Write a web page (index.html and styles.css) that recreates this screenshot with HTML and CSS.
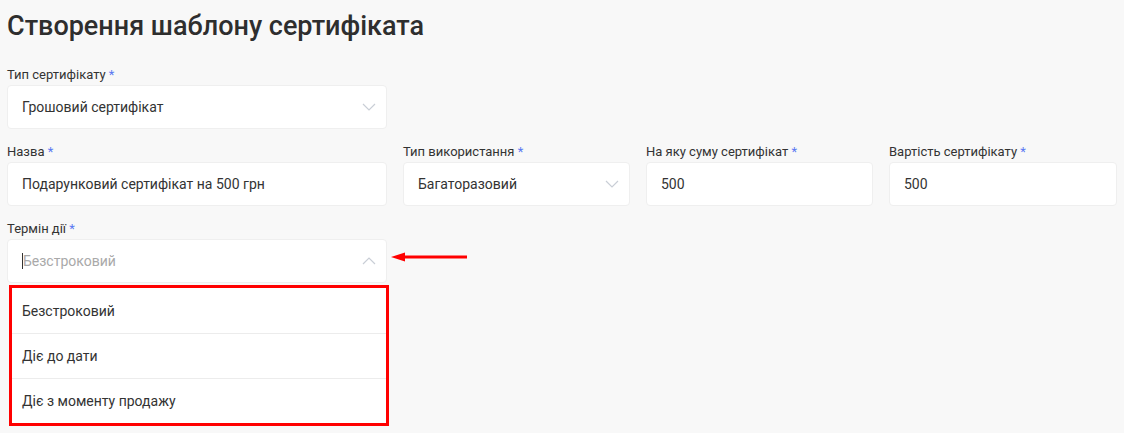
FILE: index.html
```html
<!DOCTYPE html>
<html lang="uk">
<head>
<meta charset="utf-8">
<link rel="stylesheet" href="styles.css">
</head>
<body>
<div class="page">
  <h1 class="title">Створення шаблону сертифіката</h1>
  <div class="form">
    <div class="field">
      <label class="label">Тип сертифікату <span class="req">*</span></label>
      <div class="box select">
        <span class="value">Грошовий сертифікат</span>
        <svg class="chev" width="14" height="8" viewBox="0 0 14 8"><path d="M1 1l6 6 6-6" fill="none" stroke="#c9ced6" stroke-width="1.2"/></svg>
      </div>
    </div>
    <div class="spacer3"></div>

    <div class="field">
      <label class="label">Назва <span class="req">*</span></label>
      <div class="box"><span class="value">Подарунковий сертифікат на 500 грн</span></div>
    </div>
    <div class="field">
      <label class="label">Тип використання <span class="req">*</span></label>
      <div class="box select">
        <span class="value">Багаторазовий</span>
        <svg class="chev" width="14" height="8" viewBox="0 0 14 8"><path d="M1 1l6 6 6-6" fill="none" stroke="#c9ced6" stroke-width="1.2"/></svg>
      </div>
    </div>
    <div class="field">
      <label class="label">На яку суму сертифікат <span class="req">*</span></label>
      <div class="box"><span class="value">500</span></div>
    </div>
    <div class="field">
      <label class="label">Вартість сертифікату <span class="req">*</span></label>
      <div class="box"><span class="value">500</span></div>
    </div>

    <div class="field open">
      <label class="label">Термін дії <span class="req">*</span></label>
      <div class="box select">
        <span class="caret"></span><span class="placeholder">Безстроковий</span>
        <svg class="chev" width="14" height="8" viewBox="0 0 14 8"><path d="M1 7l6-6 6 6" fill="none" stroke="#c9ced6" stroke-width="1.2"/></svg>
        <svg class="arrow" width="78" height="10" viewBox="0 0 78 10"><path d="M0 5L14 0.5V9.5Z" fill="#f00"/><path d="M10 5H76" stroke="#f00" stroke-width="3"/></svg>
      </div>
      <ul class="menu">
        <li>Безстроковий</li>
        <li>Діє до дати</li>
        <li>Діє з моменту продажу</li>
      </ul>
    </div>
  </div>
</div>
</body>
</html>
```

FILE: styles.css
```css
* { box-sizing: border-box; }
html, body { margin: 0; padding: 0; }
body {
  background: #f8f8f8;
  font-family: Roboto, "Noto Sans", sans-serif;
  color: #333;
  width: 1124px;
  height: 433px;
  overflow: hidden;
}
.page { padding: 11px 7px 0 7px; }
.title {
  margin: 0 0 25px 0;
  font-size: 27px;
  line-height: 31px;
  font-weight: 500;
  color: #2e2e2e;
  letter-spacing: 0;
}
.form {
  display: grid;
  grid-template-columns: 380px 227px 227px 228px;
  column-gap: 16px;
  row-gap: 15px;
}
.spacer3 { grid-column: span 3; }
.field { display: flex; flex-direction: column; position: relative; }
.label {
  font-size: 13px;
  line-height: 16px;
  margin-bottom: 2px;
  color: #333;
}
.req { color: #5b79f2; }
.box {
  height: 44px;
  background: #fff;
  border: 1px solid #efefef;
  border-radius: 4px;
  display: flex;
  align-items: center;
  padding: 0 10px 0 14px;
  position: relative;
  font-size: 14px;
  color: #333;
}
.value { flex: 1; }
.placeholder { flex: 1; color: #a9a9a9; }
.caret {
  width: 1px;
  height: 16px;
  background: #333;
}
.chev { flex: none; }
.arrow {
  position: absolute;
  left: 383px;
  top: 12px;
}
.menu {
  position: absolute;
  top: 64px;
  left: 2px;
  width: 380px;
  margin: 0;
  padding: 0;
  list-style: none;
  background: #fff;
  border: 3px solid #ff0000;
  z-index: 2;
}
.menu li {
  height: 45px;
  display: flex;
  align-items: center;
  padding-left: 10px;
  font-size: 14px;
  color: #333;
  border-top: 1px solid #ececec;
}
.menu li:first-child { border-top: none; }
```
